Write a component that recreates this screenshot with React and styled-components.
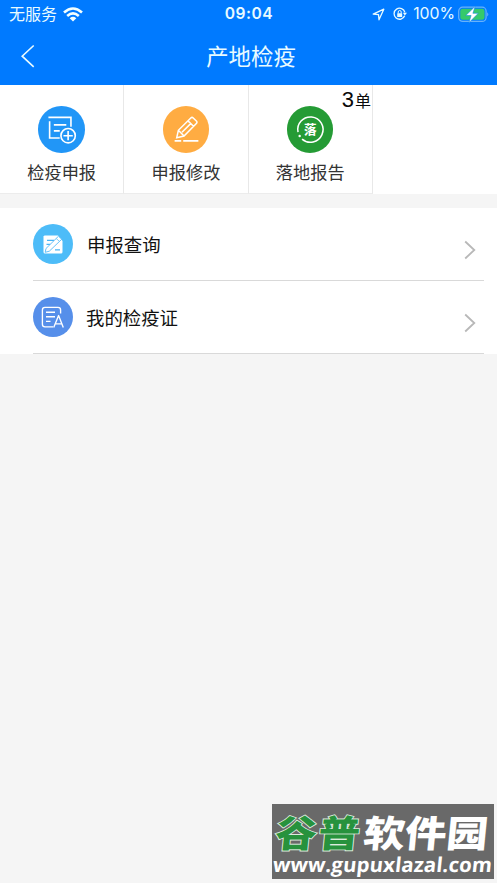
import React from 'react';
import styled, { createGlobalStyle } from 'styled-components';

const GlobalStyle = createGlobalStyle`
  * { box-sizing: border-box; }
  body { margin: 0; background: #f5f5f5; }
`;

const Screen = styled.div`
  position: relative;
  display: flex;
  flex-direction: column;
  height: 883px;
  width: 497px;
  overflow: hidden;
  background: #f5f5f5;
  font-family: "Liberation Sans", "Noto Sans CJK SC", sans-serif;
  white-space: nowrap;
`;

const Header = styled.header`
  flex: none;
  height: 85px;
  color: #e9fbff;
  background: #007aff;
`;

const StatusBar = styled.div`
  display: grid;
  grid-template-columns: 1fr auto 1fr;
  align-items: center;
  height: 28px;
  padding: 0 8px 0 9px;
`;

const StatusGroup = styled.div`
  display: flex;
  align-items: center;
  justify-content: ${(p) => (p.$end ? 'flex-end' : 'flex-start')};
  svg { display: block; flex: none; }
`;

const Carrier = styled.span`
  margin-right: 6px;
  padding-bottom: 3px;
  font: 400 16px/24px "Noto Sans CJK SC", sans-serif;
`;

const Clock = styled.span`
  font: 600 15.6px/28px Inter, sans-serif;
  letter-spacing: 0.5px;
`;

const Percent = styled.span`
  margin: 0 3px 0 6px;
  font: 400 15.8px/28px Inter, sans-serif;
`;

const LockSlot = styled.span`
  margin-left: 8px;
`;

const NavBar = styled.div`
  display: grid;
  grid-template-columns: 60px 1fr 60px;
  align-items: center;
  height: 56px;
`;

const BackButton = styled.button`
  display: flex;
  padding: 0 0 0 20px;
  border: 0;
  color: inherit;
  background: none;
`;

const Title = styled.h1`
  margin: 0 0 3px;
  padding-left: 5px;
  text-align: center;
  font: 400 22.4px/50px "Noto Sans CJK SC", sans-serif;
`;

const TileGrid = styled.section`
  display: grid;
  grid-template-columns: 124.3px 124.3px 124.3px;
  flex: none;
  height: 109px;
  background: #fff;
`;

const Tile = styled.div`
  position: relative;
  display: flex;
  flex-direction: column;
  align-items: center;
  padding-top: 21px;
  border-right: 1px solid #e8e8e8;
  border-bottom: 1px solid #ececec;
`;

const Disc = styled.div`
  flex: none;
  width: ${(p) => p.$size}px;
  height: ${(p) => p.$size}px;
  border-radius: 50%;
  background: ${(p) => p.$color};
  svg { display: block; width: 100%; height: 100%; }
`;

const TileLabel = styled.span`
  margin-top: 6.5px;
  color: #333;
  font: 400 17.2px/26px "Noto Sans CJK SC", sans-serif;
`;

const CountBadge = styled.span`
  position: absolute;
  top: 2px;
  right: 1px;
  display: flex;
  align-items: baseline;
  color: #0a0a0a;
  font: 400 16px/26px "Noto Sans CJK SC", sans-serif;
`;

const Count = styled.span`
  margin-right: 1px;
  font: 400 22px/26px "Liberation Sans", sans-serif;
`;

const List = styled.section`
  display: flex;
  flex-direction: column;
  flex: none;
  margin-top: 14px;
  padding: 0 13px 0 33px;
  background: #fff;
`;

const Row = styled.div`
  display: flex;
  align-items: center;
  height: ${(p) => p.$height}px;
  border-bottom: 1px solid #d9d9d9;
`;

const RowLabel = styled.span`
  flex: 1;
  padding-left: ${(p) => p.$indent}px;
  color: #111;
  font: 400 18.4px/30px "Noto Sans CJK SC", sans-serif;
`;

const Chevron = styled.svg`
  display: block;
  width: 12px;
  height: 20px;
  margin: 12px 8px 0 0;
`;

const Watermark = styled.aside`
  position: absolute;
  left: 272px;
  top: 804px;
  width: 222px;
  height: 75px;
  overflow: hidden;
  color: #fff;
  background: #696969;
`;

const Brand = styled.div`
  display: flex;
  height: 48px;
  padding-left: 4px;
  font: 900 41.5px/55px "Noto Sans CJK SC", sans-serif;
  transform: scaleY(0.89);
  transform-origin: 0 28px;
  span { transform: skewX(-5deg); }
`;

const BrandGreen = styled.span`
  color: #27923d;
  -webkit-text-stroke: 2px #dcebdd;
  paint-order: stroke fill;
  letter-spacing: 1.5px;
`;

const BrandWhite = styled.span`
  margin-left: 2px;
`;

const Site = styled.div`
  padding-left: 1px;
  font: 700 20.4px/24px "Open Sans", sans-serif;
  letter-spacing: 0.12px;
  transform: skewX(-6deg);
`;

const stroke = { fill: 'none', stroke: '#fff', strokeLinecap: 'butt', strokeLinejoin: 'miter' };

function WifiIcon() {
  return (
    <svg width="20" height="15" viewBox="0 0 20 15">
      <g fill="none" stroke="#f3ffff" strokeWidth="2.6">
        <path d="M1 5.5Q10-2.5 19 5.5" />
        <path d="M4.2 9Q10 3.8 15.8 9" />
      </g>
      <path d="M6.7 11.2Q10 8.4 13.3 11.2L10 14.6Z" fill="#f3ffff" />
    </svg>
  );
}

function LocationIcon() {
  return (
    <svg width="13" height="13" viewBox="0 0 13 13">
      <path d="M1.2 6.1L11.8 1.2L7 11.8L6.5 6.6Z" fill="none" stroke="#e9fbff" strokeWidth="1.3" strokeLinejoin="round" />
    </svg>
  );
}

function LockIcon() {
  return (
    <svg width="14" height="14" viewBox="0 0 14 14">
      <path d="M11.7 8.8A5.5 5.5 0 1 1 11.9 5.3" fill="none" stroke="#e9fbff" strokeWidth="1.3" />
      <path d="M9.8 5.7h4.2l-2.1 2.8z" fill="#e9fbff" />
      <rect x="4.2" y="6.3" width="5" height="3.7" rx=".5" fill="#e9fbff" />
      <path d="M5.2 6.5V5a1.5 1.5 0 0 1 3 0v1.5" fill="none" stroke="#e9fbff" />
    </svg>
  );
}

function BatteryIcon() {
  return (
    <svg width="31" height="17" viewBox="0 0 31 17">
      <rect x=".7" y="1.2" width="27.4" height="14.2" rx="4" fill="none" stroke="#69b2fa" strokeWidth="1.2" />
      <rect x="2.3" y="2.8" width="24.2" height="11" rx="2.4" fill="#35c96b" />
      <path d="M29.2 6.2q2.2 2.2 0 4.4z" fill="#69b2fa" />
      <path d="M17.2.3L7.8 9.5h5.3L10.9 16.7l9.4-9.4h-5.4z" fill="#fff" stroke="#168be0" strokeWidth=".6" />
    </svg>
  );
}

function DeclareIcon() {
  return (
    <svg viewBox="0 0 46 46" {...stroke} strokeWidth="1.6">
      <path d="M10.3 11.3H32.6V20.5M11.5 15V31.7H21.5M15.7 18.7H28M15.7 24.6H21.5" />
      <circle cx="29.8" cy="29.4" r="7.1" />
      <path d="M29.8 24.8v9.2M25.2 29.4h9.2" />
    </svg>
  );
}

function PencilIcon() {
  return (
    <svg viewBox="0 0 46 46" {...stroke} strokeWidth="1.5">
      <path d="M13.6 31.3L15.2 24L27.5 11.8Q28.7 10.6 29.9 11.8L33 14.9Q34.2 16.1 33 17.3L20.8 29.7ZM24.7 14.7L30.2 20.1M15.2 24L20.8 29.7M18.8 26L27.6 17.2" />
      <path d="M11.5 34.5h6.5M20 34.5h15" />
    </svg>
  );
}

const SealText = styled.text`
  font: 700 12.5px "Noto Sans CJK SC", sans-serif;
`;

function SealIcon() {
  return (
    <svg viewBox="0 0 46 46" {...stroke} strokeWidth="1.5">
      <path d="M10.9 25.8A12.5 12.5 0 1 1 14.9 32.7" />
      <circle cx="12.5" cy="29.6" r="1.2" fill="#fff" stroke="none" />
      <SealText x="23" y="27.5" textAnchor="middle" fill="#fff" stroke="none">落</SealText>
    </svg>
  );
}

function QueryIcon() {
  return (
    <svg viewBox="0 0 40 40">
      <path d="M11.5 11.5H25L29.5 17V28Q29.5 29.5 28 29.5H12Q10.5 29.5 10.5 28V12.5Z" fill="#fff" />
      <path d="M14 16.3h7M13.5 20.3h4M22 25.8h5" stroke="#4ab5f5" strokeWidth="1.3" />
      <path d="M12.2 28.3L13 24.5L25.5 12.2L28.7 15.3L16.3 27.2Z" fill="#fff" stroke="#55baf7" strokeWidth=".9" />
      <path d="M23.2 14.5L26.6 17.5" fill="none" stroke="#70c7fa" strokeWidth=".9" />
    </svg>
  );
}

function CertificateIcon() {
  return (
    <svg viewBox="0 0 40 40" {...stroke} strokeWidth="1.35" strokeLinejoin="round">
      <path d="M20 29.8H12Q9.4 29.8 9.4 27.2V13Q9.4 10.4 12 10.4H25Q27.6 10.4 27.6 13V16.5M13 15.2h9M13 19.7h9M13 24.3h4.5" />
      <path d="M20.7 30.5L25.6 18.5L30.3 30.5M22.2 26.8H28.9" />
    </svg>
  );
}

const tiles = [
  { label: '检疫申报', color: '#2196f7', Icon: DeclareIcon },
  { label: '申报修改', color: '#ffac42', Icon: PencilIcon },
  { label: '落地报告', color: '#259b35', Icon: SealIcon, count: 3 },
];

const rows = [
  { label: '申报查询', color: '#4dbcf8', Icon: QueryIcon, height: 73, indent: 14 },
  { label: '我的检疫证', color: '#568fea', Icon: CertificateIcon, height: 72.5, indent: 13 },
];

export default function App() {
  return (
    <Screen>
      <GlobalStyle />
      <Header>
        <StatusBar>
          <StatusGroup>
            <Carrier>无服务</Carrier>
            <WifiIcon />
          </StatusGroup>
          <Clock>09:04</Clock>
          <StatusGroup $end>
            <LocationIcon />
            <LockSlot><LockIcon /></LockSlot>
            <Percent>100%</Percent>
            <BatteryIcon />
          </StatusGroup>
        </StatusBar>
        <NavBar>
          <BackButton aria-label="返回">
            <svg width="16" height="24" viewBox="0 0 16 24">
              <path d="M13.7 1.5L2.2 12.2L13.7 22.8" fill="none" stroke="#e9fbff" strokeWidth="1.6" />
            </svg>
          </BackButton>
          <Title>产地检疫</Title>
        </NavBar>
      </Header>

      <TileGrid>
        {tiles.map(({ label, color, Icon, count }) => (
          <Tile key={label}>
            <Disc $size={46.5} $color={color}><Icon /></Disc>
            <TileLabel>{label}</TileLabel>
            {count && <CountBadge><Count>{count}</Count>单</CountBadge>}
          </Tile>
        ))}
      </TileGrid>

      <List>
        {rows.map(({ label, color, Icon, height, indent }) => (
          <Row key={label} $height={height}>
            <Disc $size={40} $color={color}><Icon /></Disc>
            <RowLabel $indent={indent}>{label}</RowLabel>
            <Chevron viewBox="0 0 12 20">
              <path d="M1.2 1.5L10.3 10L1.2 18.5" fill="none" stroke="#b8b8b8" strokeWidth="1.8" />
            </Chevron>
          </Row>
        ))}
      </List>

      <Watermark>
        <Brand>
          <BrandGreen>谷普</BrandGreen>
          <BrandWhite>软件园</BrandWhite>
        </Brand>
        <Site>www.gupuxlazal.com</Site>
      </Watermark>
    </Screen>
  );
}
